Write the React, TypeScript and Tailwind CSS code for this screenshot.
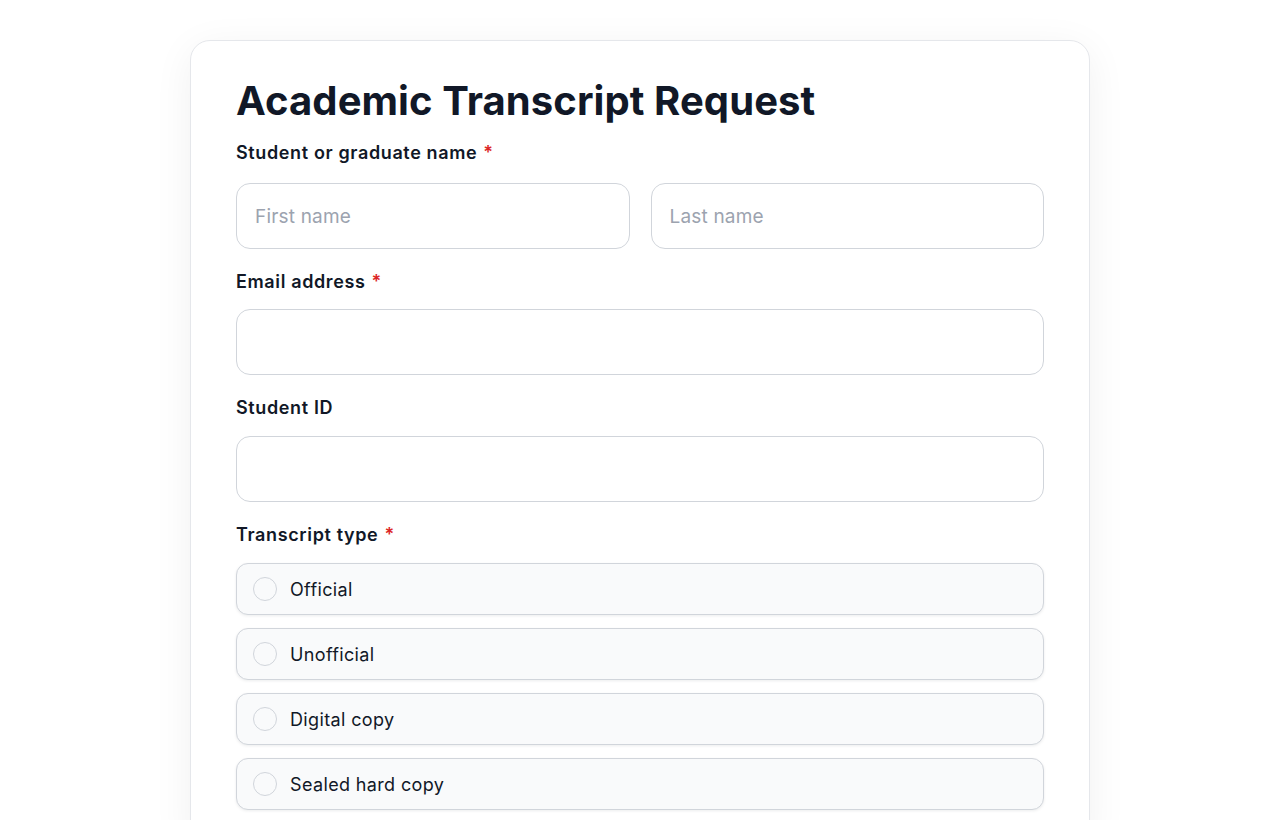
const TYPES = ['Official', 'Unofficial', 'Digital copy', 'Sealed hard copy']

function Label({ text, required }: { text: string; required?: boolean }) {
  return (
    <label className="block text-[18px] leading-6 font-semibold tracking-[0.035em] text-[#111827]">
      {text}
      {required && <span className="text-[#dc2626] ml-1.5">*</span>}
    </label>
  )
}

function TextInput({ placeholder }: { placeholder?: string }) {
  return (
    <input
      type="text"
      placeholder={placeholder}
      className="w-full h-[66px] rounded-[14px] border border-[#d1d5db] bg-white px-[18px]
                 text-[19px] tracking-[0.01em] text-[#111827] placeholder:text-[#9ca3af] outline-none"
    />
  )
}

export default function App() {
  return (
    <div
      className="min-h-screen bg-white pt-10 overflow-hidden"
      style={{ fontFamily: 'Inter, "Noto Sans", sans-serif' }}
    >
      <div className="mx-auto w-[900px] rounded-[20px] border border-[#e5e7eb] bg-white
                      px-[45px] pt-[36px] pb-10 shadow-[0_8px_40px_rgba(17,24,39,0.06)]">
        <h1 className="text-[40px] leading-[48px] font-bold tracking-[0.002em] text-[#111827]">
          Academic Transcript Request
        </h1>

        {/* Name */}
        <div className="mt-4">
          <Label text="Student or graduate name" required />
          <div className="mt-[18px] grid grid-cols-2 gap-[21px]">
            <TextInput placeholder="First name" />
            <TextInput placeholder="Last name" />
          </div>
        </div>

        {/* Email */}
        <div className="mt-[21px]">
          <Label text="Email address" required />
          <div className="mt-[15px]">
            <TextInput />
          </div>
        </div>

        {/* Student ID */}
        <div className="mt-[21px]">
          <Label text="Student ID" />
          <div className="mt-4">
            <TextInput />
          </div>
        </div>

        {/* Transcript type */}
        <div className="mt-[21px]">
          <Label text="Transcript type" required />
          <div className="mt-4 flex flex-col gap-[13px]">
            {TYPES.map(t => (
              <label
                key={t}
                className="flex items-center gap-[13px] h-[52px] px-4 rounded-[12px]
                           border border-[#d1d5db] bg-[#f9fafb]
                           shadow-[0_1px_3px_rgba(17,24,39,0.08)] cursor-pointer"
              >
                <span className="w-6 h-6 rounded-full border border-[#d1d5db] bg-[#f9fafb] shrink-0" />
                <span className="text-[18px] tracking-[0.02em] text-[#111827]">{t}</span>
              </label>
            ))}
          </div>
        </div>
      </div>
    </div>
  )
}
